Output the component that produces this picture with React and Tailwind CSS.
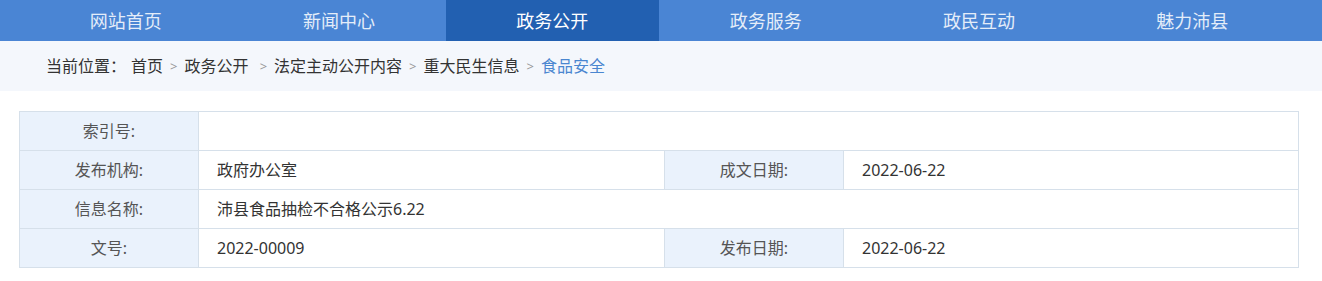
const navItems = ["网站首页", "新闻中心", "政务公开", "政务服务", "政民互动", "魅力沛县"];

const crumbs = ["首页", "政务公开\u00a0", "法定主动公开内容", "重大民生信息"];

const Label = ({ children, className = "" }) => (
    <div className={`h-[39px] flex items-center justify-center bg-[#eaf2fc] text-[#555] border-r border-b border-[#d6e0ea] ${className}`}>
        {children}
    </div>
);

const Value = ({ children, className = "" }) => (
    <div className={`h-[39px] flex items-center pl-[18px] text-[#333] border-r border-b border-[#d6e0ea] ${className}`}>
        {children}
    </div>
);

export default function App() {
    return (
        <div className="w-[1322px] h-[281px] bg-white font-['Noto_Sans','Noto_Sans_CJK_SC',sans-serif]">
            {/* 顶部导航 */}
            <nav className="h-[41px] bg-[#4a85d4]">
                <ul className="ml-[19px] w-[1280px] h-full flex">
                    {navItems.map((item) => (
                        <li
                            key={item}
                            className={`flex-1 flex items-center justify-center text-[18px] leading-none ${item === "政务公开" ? "bg-[#2260b1] text-white" : "text-[#e4edf9]"}`}
                        >
                            {item}
                        </li>
                    ))}
                </ul>
            </nav>

            {/* 当前位置 */}
            <div className="h-[50px] bg-[#f4f7fc] flex items-center pl-[46px] text-[16px] text-[#333] leading-none">
                <span className="mr-[5px]">当前位置：</span>
                {crumbs.map((c) => (
                    <span key={c} className="flex items-center">
                        <span>{c}</span>
                        <span className="mx-[7px] text-[13px] text-[#999]">&gt;</span>
                    </span>
                ))}
                <span className="text-[#4a86d0]">食品安全</span>
            </div>

            {/* 信息表 */}
            <div className="mt-[20px] ml-[19px] w-[1280px] border-l border-t border-[#d6e0ea] text-[16px] leading-none">
                <div className="flex">
                    <Label className="w-[179px]">索引号:</Label>
                    <Value className="flex-1"></Value>
                </div>
                <div className="flex">
                    <Label className="w-[179px]">发布机构:</Label>
                    <Value className="w-[466px]">政府办公室</Value>
                    <Label className="w-[179px]">成文日期:</Label>
                    <Value className="flex-1">2022-06-22</Value>
                </div>
                <div className="flex">
                    <Label className="w-[179px]">信息名称:</Label>
                    <Value className="flex-1">沛县食品抽检不合格公示6.22</Value>
                </div>
                <div className="flex">
                    <Label className="w-[179px]">文号:</Label>
                    <Value className="w-[466px]">2022-00009</Value>
                    <Label className="w-[179px]">发布日期:</Label>
                    <Value className="flex-1">2022-06-22</Value>
                </div>
            </div>
        </div>
    );
}
